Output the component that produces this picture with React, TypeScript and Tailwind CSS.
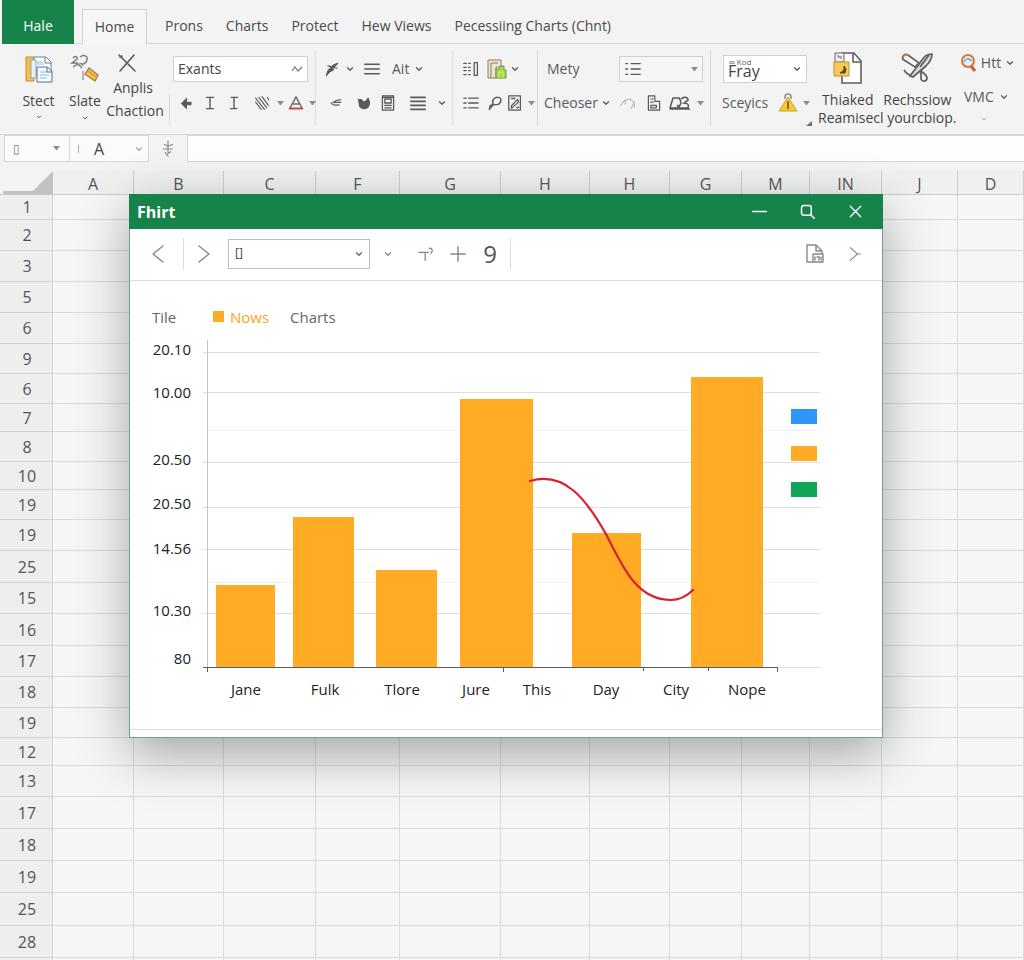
import { useState } from "react";
import type { ReactNode } from "react";
import { ChevronDown } from "lucide-react";

type Column = { label: string; width: string };
type Row = { label: string; height: string };
type Bar = { x: number; width: number; top: number };

const tabs = ["Prons", "Charts", "Protect", "Hew Views", "Pecessiing Charts (Chnt)"];

const columns: Column[] = [
  { label: "A", width: "w-[81px]" },
  { label: "B", width: "w-[90px]" },
  { label: "C", width: "w-[92px]" },
  { label: "F", width: "w-[84px]" },
  { label: "G", width: "w-[101px]" },
  { label: "H", width: "w-[89px]" },
  { label: "H", width: "w-[80px]" },
  { label: "G", width: "w-[72px]" },
  { label: "M", width: "w-[68px]" },
  { label: "IN", width: "w-[72px]" },
  { label: "J", width: "w-[76px]" },
  { label: "D", width: "" },
];

const rows: Row[] = [
  { label: "1", height: "h-[25px]" },
  { label: "2", height: "h-[31px]" },
  { label: "3", height: "h-[31px]" },
  { label: "5", height: "h-[31px]" },
  { label: "6", height: "h-[31px]" },
  { label: "9", height: "h-[30px]" },
  { label: "6", height: "h-[30px]" },
  { label: "7", height: "h-[28px]" },
  { label: "8", height: "h-[30px]" },
  { label: "10", height: "h-[28px]" },
  { label: "19", height: "h-[30px]" },
  { label: "19", height: "h-[31px]" },
  { label: "25", height: "h-[32px]" },
  { label: "15", height: "h-[31px]" },
  { label: "16", height: "h-[32px]" },
  { label: "17", height: "h-[31px]" },
  { label: "18", height: "h-[31px]" },
  { label: "19", height: "h-[30px]" },
  { label: "12", height: "h-[28px]" },
  { label: "13", height: "h-[31px]" },
  { label: "17", height: "h-[32px]" },
  { label: "18", height: "h-[32px]" },
  { label: "19", height: "h-[32px]" },
  { label: "25", height: "h-[33px]" },
  { label: "28", height: "h-[32px]" },
  { label: "", height: "h-[32px]" },
];

const yLabels = [
  { text: "20.10", y: 20 },
  { text: "10.00", y: 63 },
  { text: "20.50", y: 130 },
  { text: "20.50", y: 174 },
  { text: "14.56", y: 219 },
  { text: "10.30", y: 281 },
  { text: "80", y: 329 },
];

const xLabels = [
  { text: "Jane", x: 116 },
  { text: "Fulk", x: 195 },
  { text: "Tlore", x: 272 },
  { text: "Jure", x: 346 },
  { text: "This", x: 407 },
  { text: "Day", x: 476 },
  { text: "City", x: 546 },
  { text: "Nope", x: 617 },
];

const gridLines = [22, 62, 132, 177, 219, 283, 337];
const faintLines = [100, 252];

const bars: Bar[] = [
  { x: 86, width: 59, top: 255 },
  { x: 163, width: 61, top: 187 },
  { x: 246, width: 61, top: 240 },
  { x: 330, width: 73, top: 69 },
  { x: 442, width: 69, top: 203 },
  { x: 561, width: 72, top: 47 },
];

const keys = [
  { y: 79, color: "#2f96f7" },
  { y: 116, color: "#ffab26" },
  { y: 152, color: "#10a557" },
];

const Caret = () => (
  <span className="w-3 flex justify-center shrink-0">
    <ChevronDown size={10} strokeWidth={3} />
  </span>
);

const SmallCaret = () => (
  <span className="w-3 flex justify-center shrink-0 text-[#8c8c8c]">
    <svg width="7" height="5" viewBox="0 0 7 5" fill="currentColor">
      <path d="M0 0h7L3.500 4.500z" />
    </svg>
  </span>
);

const Tool = ({
  label,
  width = "w-6",
  children,
}: {
  label: string;
  width?: string;
  children: ReactNode;
}) => (
  <button aria-label={label} className={`${width} h-7 flex items-center justify-center shrink-0`}>
    {children}
  </button>
);

const Glyph = ({
  size = 20,
  stroke = 1.5,
  children,
}: {
  size?: number;
  stroke?: number;
  children: ReactNode;
}) => (
  <svg
    width={size}
    height={size}
    viewBox="0 0 20 20"
    fill="none"
    stroke="currentColor"
    strokeWidth={stroke}
    strokeLinecap="round"
    strokeLinejoin="round"
  >
    {children}
  </svg>
);

const Group = ({ width, children }: { width: string; children: ReactNode }) => (
  <div className={`${width} relative shrink-0 pt-[11px] flex flex-col gap-[6px]`}>
    {children}
  </div>
);

const Rule = () => <div className="w-px h-[74px] mt-[7px] -ml-px bg-[#dcdcdc] shrink-0"></div>;

const Ribbon = () => (
  <div className="flex h-[91px] overflow-hidden border-b border-[#d6d6d6] text-[#5a5a5a]">
    {/* Clipboard */}
    <div className="w-[170px] shrink-0 flex items-start pl-[17px]">
      <button className="w-[43px] pt-[10px] flex flex-col items-center">
        <svg width="30" height="30" viewBox="0 0 30 30" fill="none">
          <path d="M2 3h8v24H2z" fill="#f6bd4b" stroke="#c98f2c" />
          <path d="M10 3h12l5 5v9H10z" fill="#fff" stroke="#6c7f97" />
          <path d="M21 3v6h6" stroke="#6c7f97" />
          <path d="M7 6h5v18H7z" fill="#e6f0fa" stroke="#8aa5c4" />
          <path d="M13 13h10l5 4v11H13z" fill="#f4f9ff" stroke="#5b6f8d" />
          <path d="M13 8h5M13 10h7M16 18h7M16 21h9M16 24h7" stroke="#8db4e2" />
          <path d="M23 13v5h5" stroke="#5b6f8d" />
        </svg>
        <span className="text-sm leading-[18px] mt-[8px] text-[#444]">Stect</span>
        <ChevronDown size={6} strokeWidth={4} className="mt-1" />
      </button>
      <button className="w-[50px] pt-[10px] flex flex-col items-center">
        <svg width="30" height="30" viewBox="0 0 30 30" fill="none" stroke="#7c7c7c" strokeWidth="1.4">
          <path d="M3 4c2-3 5-1 4 1L2 9h6M10 3c4-3 8-1 7 3s-5 5-7 3M3 13l5-3 4 4" />
          <path d="M8 12c1-3 4-3 5 0M13 17v9" stroke="#9a9a9a" />
          <path d="M19 14l9 7-3 6-10-7z" fill="#f5bf52" stroke="#a98545" />
          <path d="M18 17l8 6" stroke="#d79a35" />
        </svg>
        <span className="text-sm leading-[18px] mt-[8px] text-[#444]">Slate</span>
        <ChevronDown size={8} strokeWidth={3} className="mt-1" />
      </button>
      <button className="w-[56px] pt-[9px] -ml-[3px] flex flex-col items-center">
        <span className="w-full flex justify-center pr-4">
          <Glyph size={20} stroke={1.6}>
            <path d="M2 2l16 16M17 2L3 18M3 4l2-1" />
          </Glyph>
        </span>
        <span className="text-sm leading-[23px] mt-[3px] text-[#444]">
          <span className="block pr-1">Anplis</span>
          Chaction
        </span>
      </button>
    </div>
    <div className="w-px h-8 mt-[50px] -ml-px bg-[#dcdcdc] shrink-0"></div>

    <Group width="w-[146px]">
      <div className="h-7 pl-[3px] flex items-center relative">
        <select
          aria-label="Font"
          className="w-[135px] h-[26px] appearance-none bg-white border border-[#cfcfcf] pl-1 text-sm text-[#444]"
        >
          <option>Exants</option>
        </select>
        <svg width="12" height="8" viewBox="0 0 12 8" fill="none" stroke="#777" strokeWidth="1.2" className="absolute right-[13px] pointer-events-none">
          <path d="M1 6l3-4 3 4 4-4" />
        </svg>
      </div>
      <div className="h-7 pl-1 flex items-center">
        <Tool label="Back">
          <Glyph size={13} stroke={1.5}>
            <path d="M10 8h7v4h-7v6l-8-8 8-8z" fill="currentColor" />
          </Glyph>
        </Tool>
        <Tool label="Insert">
          <Glyph size={14} stroke={2}>
            <path d="M5 2h10M5 18h10M10 2v16" />
          </Glyph>
        </Tool>
        <Tool label="Italic">
          <Glyph size={14} stroke={2}>
            <path d="M6 2h9M5 18h9M10 2v16" />
          </Glyph>
        </Tool>
        <div className="w-px h-6 mx-0.5 bg-[#dcdcdc]"></div>
        <Tool label="Pattern">
          <Glyph size={16} stroke={1.4}>
            <path d="M2 4l11 14M6 3l10 13M10 2l8 11M2 9l7 9M17 3l1 3" />
          </Glyph>
        </Tool>
        <SmallCaret />
        <Tool label="Font color" width="w-5">
          <svg width="16" height="14" viewBox="0 0 16 14" fill="none">
            <path d="M2 12L8 1l6 11M5 8h6" stroke="#686868" strokeWidth="1.5" />
            <path d="M1 12.500h14" stroke="#c8494f" strokeWidth="2" />
          </svg>
        </Tool>
        <SmallCaret />
      </div>
    </Group>
    <Rule />

    <Group width="w-[137px]">
      <div className="h-7 pl-1 flex items-center">
        <Tool label="Brush">
          <Glyph size={16} stroke={1.6}>
            <path d="M3 18L17 3l-5 2-7 7zM5 6l11 3M8 13l4-2" fill="currentColor" />
          </Glyph>
        </Tool>
        <Caret />
        <Tool label="Lines" width="w-8">
          <Glyph size={16} stroke={2}>
            <path d="M1 4h18M1 10h18M1 16h18" />
          </Glyph>
        </Tool>
        <button className="h-7 flex items-center gap-1 pl-1 text-sm">
          Ait
          <Caret />
        </button>
      </div>
      <div className="h-7 pl-1 flex items-center">
        <Tool label="Strike" width="w-8">
          <Glyph size={12} stroke={2}>
            <path d="M18 5c-5-1-9 1-13 4h13M2 10c2 4 8 4 13 3" />
          </Glyph>
        </Tool>
        <Tool label="Fill">
          <Glyph size={14} stroke={1.5}>
            <path d="M2 5l4 0 3 3 3 0 4-5 2 6c0 6-3 9-8 9S3 14 3 10z" fill="currentColor" />
          </Glyph>
        </Tool>
        <Tool label="Form">
          <Glyph size={16} stroke={1.6}>
            <path d="M3 1h14v18H3zM6 5h8v5H6zM6 13h8M6 16h8M3 3h14" />
          </Glyph>
        </Tool>
        <Tool label="Spacing" width="w-9">
          <Glyph size={16} stroke={2}>
            <path d="M1 3h18M1 8h18M1 13h18M1 18h18" />
          </Glyph>
        </Tool>
        <Caret />
      </div>
    </Group>
    <Rule />

    <Group width="w-[85px]">
      <div className="h-7 pl-1 flex items-center">
        <Tool label="Columns" width="w-7">
          <Glyph size={16} stroke={1.6}>
            <path d="M1 3h3M7 3h2M1 8h3M7 8h2M1 12h3M7 12h2M1 17h3M7 17h2M14 2h4v16h-4z" />
          </Glyph>
        </Tool>
        <Tool label="Layers">
          <svg width="20" height="20" viewBox="0 0 20 20" fill="none">
            <path d="M1 1h13v7H9v11H1z" fill="#ebe7cf" stroke="#8a7f60" />
            <path d="M4 4h7M4 4v15" stroke="#8a7f60" />
            <path d="M9 10h4V7h4v4h2v8H9z" fill="#a9d94b" stroke="#5e9a4a" />
            <path d="M12 19v-6h4v6" stroke="#e6ef5a" />
          </svg>
        </Tool>
        <Caret />
      </div>
      <div className="h-7 pl-1 flex items-center">
        <Tool label="Bullets" width="w-7">
          <Glyph size={16} stroke={1.6}>
            <path d="M1 4h3M7 4h12M1 10h3M7 10h12M1 16h3M7 16h12" />
          </Glyph>
        </Tool>
        <Tool label="Find" width="w-5">
          <Glyph size={16} stroke={1.8}>
            <path d="M8 12c-3-4 1-10 6-9 5 0 4 8-1 9H8l-5 6 1-5z" />
          </Glyph>
        </Tool>
        <Tool label="Edit note" width="w-5">
          <Glyph size={18} stroke={1.4}>
            <path d="M3 2h13v16H3zM6 5h4M13 6l-7 7v3l8-7zM12 15h2" />
          </Glyph>
        </Tool>
        <SmallCaret />
      </div>
    </Group>
    <Rule />

    <Group width="w-[173px]">
      <div className="h-7 pl-[9px] flex items-center relative text-sm">
        <label htmlFor="mety" className="w-[72px]">
          Mety
        </label>
        <select
          id="mety"
          className="w-[84px] h-[26px] appearance-none border border-[#cfcfcf] bg-[#f6f6f6]"
        ></select>
        <span className="absolute left-[86px] pointer-events-none">
          <Glyph size={18} stroke={1.6}>
            <path d="M2 4h2M8 4h10M2 10h2M8 10h10M2 16h2M8 16h10" />
          </Glyph>
        </span>
        <span className="absolute right-[11px] pointer-events-none">
          <SmallCaret />
        </span>
      </div>
      <div className="h-7 pl-[6px] flex items-center">
        <button className="w-[70px] h-7 flex items-center gap-0.5 text-sm">
          Cheoser
          <Caret />
        </button>
        <Tool label="Undo" width="w-7">
          <span className="text-[#bdbdbd]">
            <Glyph size={16} stroke={1.5}>
              <path d="M1 13l5-7 1 5M7 7c6-4 11 0 11 8M18 9l-4 8" />
            </Glyph>
          </span>
        </Tool>
        <Tool label="Paste">
          <Glyph size={16} stroke={1.5}>
            <path d="M3 1h8v7h6v11H3zM6 5h3M6 9h3M6 13h7v3H6zM11 1v6" />
          </Glyph>
        </Tool>
        <Tool label="Objects" width="w-7">
          <svg width="22" height="14" viewBox="0 0 22 14" fill="none" stroke="currentColor" strokeWidth="1.5">
            <path d="M1 12L4 2h6c3 4 2 8-2 10zM12 3c3-3 7-2 7 1l-4 3c4 0 5 2 4 5h-8l-3-3M1 13h20" />
          </svg>
        </Tool>
        <SmallCaret />
      </div>
    </Group>
    <Rule />

    <Group width="w-[101px]">
      <div className="h-7 pl-[12px] flex items-center relative">
        <label htmlFor="fray" className="absolute left-[18px] top-[3px] text-[8px] leading-[8px] pointer-events-none">
          ═ Kod
        </label>
        <select
          id="fray"
          className="w-[84px] h-7 appearance-none bg-white border border-[#cfcfcf] pl-1 pt-1 text-base leading-5 text-[#444]"
        >
          <option>Fray</option>
        </select>
        <span className="absolute right-[9px] pointer-events-none">
          <Caret />
        </span>
      </div>
      <div className="h-7 pl-[11px] flex items-center">
        <button className="w-14 text-left text-sm">Sceyics</button>
        <Tool label="Warnings">
          <svg width="20" height="20" viewBox="0 0 20 20" fill="none">
            <path d="M7 6V4c0-4 6-4 6 0v2" stroke="#8b8b8b" strokeWidth="1.5" />
            <path d="M10 4l9 14H1z" fill="#f9c932" stroke="#c79d2c" />
            <path d="M10 8v8" stroke="#6e5a1c" strokeWidth="1.6" />
          </svg>
        </Tool>
        <SmallCaret />
      </div>
      <svg width="6" height="5" viewBox="0 0 6 5" className="absolute right-0 bottom-2">
        <path d="M6 0v5H0z" fill="#6b6b6b" />
      </svg>
    </Group>

    <div className="w-[145px] shrink-0 pl-[6px] pt-[7px] text-sm text-[#444]">
      <div className="flex">
        <button className="w-[60px] flex flex-col items-center">
          <svg width="30" height="34" viewBox="0 0 30 34" fill="none">
            <path d="M9 2h12l7 8v22H9z" fill="#fff" stroke="#5f5f5f" strokeWidth="1.6" />
            <path d="M20 2v9h8" stroke="#5f5f5f" strokeWidth="1.6" />
            <path d="M2 2h9v9H2z" fill="#eee" stroke="#6b6b6b" />
            <path d="M4 5h2v2M8 5v3" stroke="#6b6b6b" />
            <path d="M1 11h15v14H1z" fill="#f7c95b" stroke="#c39336" />
            <path d="M7 22h5l1-4-2-3v4z" fill="#5e4a1e" stroke="#5e4a1e" />
          </svg>
          <span className="leading-[18px] mt-[6px]">Thiaked</span>
        </button>
        <button className="w-[80px] flex flex-col items-center">
          <svg width="34" height="34" viewBox="0 0 34 34" fill="none" stroke="#5f5f5f" strokeWidth="1.7">
            <path d="M4 4c-2 2-2 4 0 5l11 7 4-4L8 4c-2-1-3-1-4 0z" fill="#fbf7f0" />
            <path d="M3 7c1-4 4-4 5-2" stroke="#c07a3f" />
            <path d="M32 3c-6 0-8 3-10 6L10 25l3 1 13-11c4-4 6-8 6-12z" fill="#d9d9d9" />
            <path d="M11 24c-3 0-5-2-7-5M21 20c4 3 6 5 6 7 0 4-5 4-6 1zM29 4l-9 12" />
          </svg>
          <span className="leading-[18px] mt-[6px]">Rechssiow</span>
        </button>
      </div>
      <span className="block leading-[18px] whitespace-nowrap">Reamisecl yourcbiop.</span>
    </div>

    <div className="flex-1 pl-[3px] pt-[5px] flex flex-col text-sm">
      <button className="h-7 flex items-center">
        <svg width="18" height="20" viewBox="0 0 18 20" fill="none">
          <path d="M11 13l4 5" stroke="#c4622d" strokeWidth="3" />
          <circle cx="8" cy="8" r="6" fill="#dff1f0" stroke="#d9733a" strokeWidth="2" />
          <path d="M4 9c2-4 4-4 8-1" stroke="#5ba7b5" strokeWidth="1.5" />
        </svg>
        <span className="w-[26px] text-center">Htt</span>
        <Caret />
      </button>
      <button className="h-7 mt-[6px] pl-1 flex items-center gap-1">
        <span>VMC</span>
        <Caret />
      </button>
      <span className="pl-5 mt-1">
        <ChevronDown size={8} strokeWidth={3} className="text-[#aaa]" />
      </span>
    </div>
  </div>
);

const FormulaBar = () => (
  <div className="flex items-center pl-1 h-[27px] text-[#5a5a5a]">
    <div className="flex items-center relative">
      <select
        aria-label="Name box"
        className="w-[66px] h-[27px] appearance-none bg-[#fbfbfb] border border-[#d6d6d6] pl-2 text-xs text-[#777]"
      >
        <option>▯</option>
      </select>
      <span className="absolute right-2 pointer-events-none">
        <SmallCaret />
      </span>
    </div>
    <div className="flex items-center relative">
      <select
        aria-label="Style"
        className="w-[79px] h-[27px] appearance-none bg-[#fbfbfb] border border-l-0 border-[#d6d6d6] pl-6 text-base text-[#444]"
      >
        <option>A</option>
      </select>
      <span className="absolute left-2 w-px h-2 bg-[#aaa]"></span>
      <span className="absolute right-1 pointer-events-none text-[#aaa]">
        <Caret />
      </span>
    </div>
    <Tool label="Insert function" width="w-[38px]">
      <span className="text-[#8a8a8a]">
        <Glyph size={18} stroke={1.3}>
          <path d="M10 1v5M6 5l4 2 5-2M5 10h10M10 6v9M7 14l3 4M13 13l-3 2" />
        </Glyph>
      </span>
    </Tool>
    <input aria-label="Formula" className="flex-1 h-[27px] bg-[#fdfdfd] border border-r-0 border-[#d6d6d6] px-2 text-sm" />
  </div>
);

const Sheet = () => (
  <table className="w-full table-fixed border-separate border-spacing-0 text-[#555]">
    <colgroup>
      <col className="w-[53px]" />
      {columns.map((column, i) => (
        <col key={i} className={column.width} />
      ))}
    </colgroup>
    <thead>
      <tr className="h-[24px]">
        <td className="p-0 border-b border-[#c9c9c9] align-bottom">
          <svg width="50" height="23" viewBox="0 0 50 23" className="ml-auto">
            <path d="M50 0v23H0v-3h30z" fill="#c1c1c1" />
          </svg>
        </td>
        {columns.map((column, i) => (
          <th
            key={i}
            className="p-0 pt-0.5 border-b border-r border-[#cdcdcd] bg-[#f0f0f0] text-base leading-5 font-normal"
          >
            {column.label}
          </th>
        ))}
      </tr>
    </thead>
    <tbody>
      {rows.map((row, i) => (
        <tr key={i} className={row.height}>
          <th className="p-0 pl-0.5 border-b border-r border-[#d3d3d3] bg-[#eeeeee] text-base leading-5 font-normal">
            {row.label}
          </th>
          {columns.map((_, j) => (
            <td key={j} className="p-0 border-b border-r border-[#dadada] bg-[#f6f6f6]"></td>
          ))}
        </tr>
      ))}
    </tbody>
  </table>
);

const Chart = () => (
  <svg viewBox="0 0 752 399" className="block w-full h-auto text-[15px]">
    {gridLines.map((y) => (
      <path key={y} d={`M73 ${y + 0.5}H690`} stroke="#dedede" />
    ))}
    {faintLines.map((y) => (
      <path key={y} d={`M78 ${y + 0.5}H690`} stroke="#f1f1f1" />
    ))}
    <path d="M77.500 10V342" stroke="#c4c4c4" />
    {bars.map((bar) => (
      <rect
        key={bar.x}
        x={bar.x}
        y={bar.top}
        width={bar.width}
        height={337 - bar.top}
        fill="#ffab26"
      />
    ))}
    <path d="M73 337.500H647.500V342M373.500 337V342M513.500 337V341M578.500 337V341M77.500 337V342" stroke="#5c5c5c" fill="none" />
    <path
      d="M400 151C434 141 456 168 477 206C494 240 508 270 541 270C550 270 557 266 563 260"
      fill="none"
      stroke="#d6222f"
      strokeWidth="2.2"
      strokeLinecap="round"
    />
    {keys.map((key) => (
      <rect key={key.y} x="661" y={key.y} width="26" height="15" fill={key.color} />
    ))}
    <g fill="#222">
      {yLabels.map((label) => (
        <text key={label.y} x="61" y={label.y + 5} textAnchor="end">
          {label.text}
        </text>
      ))}
      {xLabels.map((label) => (
        <text key={label.x} x={label.x} y="365" textAnchor="middle">
          {label.text}
        </text>
      ))}
    </g>
  </svg>
);

const ChartWindow = () => (
  <section className="absolute left-[129px] right-[141px] top-[23px] bg-white border border-[#6fa28b] shadow-[0_16px_48px_rgba(40,60,55,0.42)]">
    {/* Title bar */}
    <div className="-mx-px -mt-px h-[35px] bg-[#15834a] text-white flex items-center pl-2 pr-4">
      <h2 className="flex-1 text-base font-bold">Fhirt</h2>
      <div className="flex gap-6">
        <button aria-label="Minimize" className="w-6 h-6 flex items-center justify-center">
          <Glyph size={15} stroke={2}>
            <path d="M1 10h18" />
          </Glyph>
        </button>
        <button aria-label="Search" className="w-6 h-6 flex items-center justify-center">
          <Glyph size={15} stroke={2}>
            <path d="M5 2h7c2 0 3 1 3 3v7c0 2-1 3-3 3H6c-3 0-4-1-4-3V6c0-3 1-4 3-4zM14 14l5 5" />
          </Glyph>
        </button>
        <button aria-label="Close" className="w-6 h-6 flex items-center justify-center">
          <Glyph size={13} stroke={2}>
            <path d="M2 2l16 16M18 2L2 18" />
          </Glyph>
        </button>
      </div>
    </div>

    {/* Toolbar */}
    <div className="h-[52px] border-b border-[#dedede] flex items-center pl-4 pr-[15px] pb-0.5 text-[#888]">
      <Tool label="Previous">
        <Glyph size={20} stroke={1.4}>
          <path d="M15 2L5 10l10 8" />
        </Glyph>
      </Tool>
      <div className="w-px h-8 ml-[13px] mr-2 bg-[#dedede]"></div>
      <Tool label="Next">
        <Glyph size={20} stroke={1.4}>
          <path d="M5 2l10 8-10 8" />
        </Glyph>
      </Tool>
      <div className="ml-3 flex items-center relative">
        <select
          aria-label="Range"
          className="w-[142px] h-[30px] appearance-none border border-[#bdbdbd] bg-white pl-1.5 pb-0.5 text-xs text-[#444]"
        >
          <option>[]</option>
        </select>
        <span className="absolute right-[5px] pointer-events-none text-[#666]">
          <Caret />
        </span>
      </div>
      <Tool label="More ranges" width="w-9">
        <Caret />
      </Tool>
      <Tool label="Step" width="w-10">
        <Glyph size={16} stroke={1.6}>
          <path d="M1 8h12M9 8v10M14 3c4-1 5 3 2 6" />
        </Glyph>
      </Tool>
      <Tool label="Add">
        <Glyph size={16} stroke={1.8}>
          <path d="M1 10h18M10 1v18" />
        </Glyph>
      </Tool>
      <button className="w-10 text-2xl leading-7 text-[#555]">9</button>
      <div className="w-px h-8 bg-[#dedede]"></div>
      <div className="ml-auto flex gap-4">
        <Tool label="Save as">
          <Glyph size={20} stroke={1.4}>
            <path d="M8 18H2V1h9l6 6v3M11 1v6h6M8 10h10v8H8zM10 13v3M12 13h2v3M16 13v3" />
          </Glyph>
        </Tool>
        <Tool label="Expand">
          <Glyph size={16} stroke={1.4}>
            <path d="M4 2l9 8-9 8M13 10h4" />
          </Glyph>
        </Tool>
      </div>
    </div>

    <div className="h-[49px] pl-[22px] pt-[22px] flex items-center text-[15px] leading-5 text-[#666]">
      <span className="w-[61px]">Tile</span>
      <span className="w-[77px] flex items-center gap-1.5 text-[#f5a623]">
        <span className="w-[11px] h-[11px] bg-[#ffab26]"></span>
        Nows
      </span>
      <span>Charts</span>
    </div>
    <Chart />
    <div className="h-2 border-t border-[#d5dedb]"></div>
  </section>
);

const App = () => {
  const [activeTab, setActiveTab] = useState("Home");

  return (
    <div className="h-screen overflow-hidden bg-[#f3f3f3] font-['Open_Sans','Noto_Sans',sans-serif]">
      {/* Tabs */}
      <nav className="flex items-end pl-[2px] h-11 text-sm text-[#4a4a4a]">
        <button className="w-[72px] h-11 pt-2 bg-[#15834a] text-white font-medium">Hale</button>
        <div className="w-2 self-stretch border-b border-[#d6d6d6]"></div>
        <button
          onClick={() => setActiveTab("Home")}
          aria-pressed={activeTab === "Home"}
          className="w-[65px] h-[35px] border border-b-0 border-[#d0d0d0] bg-[#f6f6f6]"
        >
          Home
        </button>
        <div className="flex-1 self-stretch border-b border-[#d6d6d6] flex items-end gap-[23px] pl-[18px]">
          {tabs.map((tab) => (
            <button
              key={tab}
              onClick={() => setActiveTab(tab)}
              aria-pressed={activeTab === tab}
              className="h-[34px] whitespace-nowrap"
            >
              {tab}
            </button>
          ))}
        </div>
      </nav>
      <Ribbon />
      <FormulaBar />

      <main className="relative mt-[9px]">
        <Sheet />
        <ChartWindow />
      </main>
    </div>
  );
};

export default App;
